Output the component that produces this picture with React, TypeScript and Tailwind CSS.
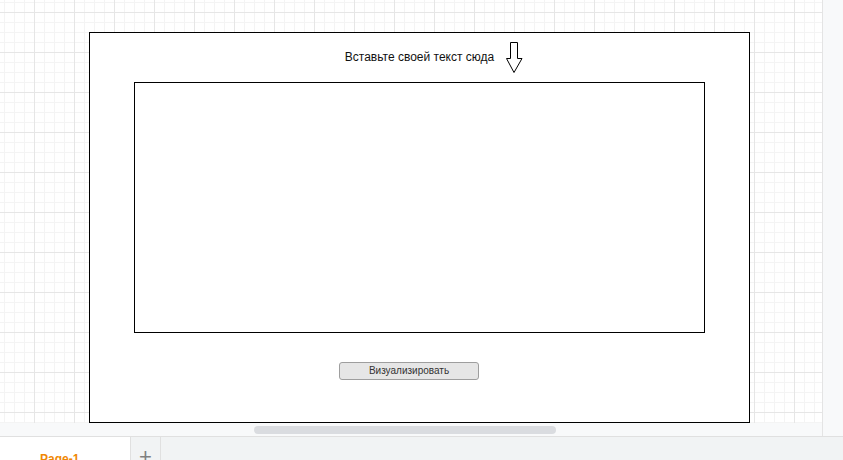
import React from 'react';

const DownArrow = () => (
  <svg width="18" height="33" viewBox="0 0 18 33" className="block">
    <path
      d="M4.5 0.5 H11.5 V16.5 H16 L8 30.5 L0.5 16.5 H4.5 Z"
      fill="#ffffff"
      stroke="#000000"
      strokeWidth="1"
      strokeLinejoin="miter"
    />
  </svg>
);

const App = () => {
  return (
    <div className="w-[843px] h-[460px] overflow-hidden bg-[#f1f3f4] font-['Liberation_Sans',Arial,sans-serif]">
      <div className="flex h-[436px]">
        <div className="flex flex-col w-[822px]">
          {/* canvas */}
          <div className="h-[423px] flex flex-col bg-white bg-[linear-gradient(to_right,#e6e6e6_1px,transparent_1px),linear-gradient(to_bottom,#e6e6e6_1px,transparent_1px),linear-gradient(to_right,#f4f4f4_1px,transparent_1px),linear-gradient(to_bottom,#f4f4f4_1px,transparent_1px)] bg-size-[40px_40px,40px_40px,10px_10px,10px_10px] bg-position-[34px_12px]">
            <div className="ml-[89px] mt-[32px] w-[661px] h-[391px] border border-black bg-white flex flex-col">
              <div className="flex justify-center pt-[9px] h-[49px]">
                <div className="relative">
                  <span className="block text-[12px] leading-[14px] text-[#111] pt-[8px]">
                    Вставьте своей текст сюда
                  </span>
                  <div className="absolute left-full top-0 ml-[12px]">
                    <DownArrow />
                  </div>
                </div>
              </div>
              <div className="ml-[44px] w-[571px] h-[251px] border border-black bg-white" />
              <button
                type="button"
                className="ml-[249px] mt-[29px] w-[140px] h-[18px] rounded-[3px] border border-[#9e9e9e] bg-[#e6e6e6] text-[10px] leading-[16px] text-[#333] font-['Liberation_Sans',Arial,sans-serif]"
              >
                Визуализировать
              </button>
            </div>
          </div>
          {/* horizontal scroll strip */}
          <div className="h-[13px] bg-[#f8f9fa] flex items-center">
            <div className="ml-[254px] w-[302px] h-[8px] rounded-full bg-[#dadce0]" />
          </div>
        </div>
        <div className="flex-1 bg-[#f8f9fa] border-l border-[#e4e4e4]" />
      </div>
      {/* page tabs */}
      <div className="h-[24px] border-t border-[#e0e0e0] flex bg-[#f1f3f4]">
        <div className="w-[130px] bg-white pl-[40px] pt-[15px]">
          <span className="block text-[12px] leading-[14px] font-bold text-[#f08705]">Page-1</span>
        </div>
        <div className="w-[31px] border-l border-r border-[#e0e0e0] flex justify-center pt-[9px]">
          <span className="block text-[22px] leading-[22px] text-[#808080]">+</span>
        </div>
      </div>
    </div>
  );
};

export default App;
